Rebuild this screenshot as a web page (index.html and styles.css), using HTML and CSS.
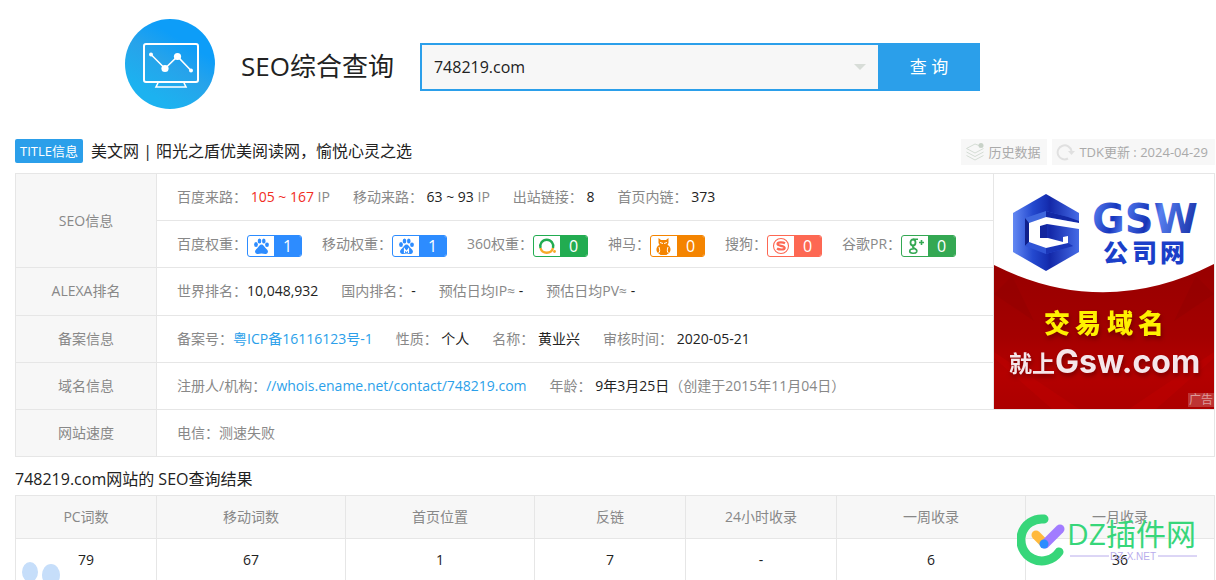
FILE: index.html
```html
<!DOCTYPE html>
<html lang="zh-CN">
<head>
    <meta charset="UTF-8">
    <meta name="viewport" content="width=device-width, initial-scale=1.0">
    <title>SEO综合查询</title>
    <link rel="stylesheet" href="styles.css">
</head>
<body>
    <header class="search-header">
        <svg class="logo" width="90" height="90" viewBox="0 0 90 90" aria-hidden="true">
            <defs>
                <linearGradient id="logoFill" x1="0.8" y1="0" x2="0.2" y2="1">
                    <stop offset="0.25" stop-color="#0d9df8"/>
                    <stop offset="0.5" stop-color="#27a3ea"/>
                    <stop offset="0.85" stop-color="#1cb2f0"/>
                </linearGradient>
            </defs>
            <circle cx="45" cy="45" r="45" fill="url(#logoFill)"/>
            <g fill="none" stroke="#fff" stroke-width="2">
                <rect x="19" y="25" width="54" height="38" rx="2"/>
                <path d="M33 64l-2 4h30l-2-4" stroke-width="1.6"/>
                <path d="M26 35.500l14 14 12.500-12 13.500 14" stroke-width="1.6"/>
            </g>
            <g fill="#fff">
                <circle cx="26" cy="35.500" r="2"/>
                <circle cx="40" cy="49.500" r="3.600"/>
                <circle cx="52.500" cy="37.500" r="3.600"/>
                <circle cx="66" cy="51.500" r="2"/>
            </g>
        </svg>
        <h1>SEO综合查询</h1>
        <form class="search-form">
            <div class="search-box">
                <input type="text" value="748219.com" aria-label="域名">
                <span class="search-arrow"></span>
            </div>
            <button type="button">查 询</button>
        </form>
    </header>

    <main>
        <div class="title-bar">
            <span class="title-tag">TITLE信息</span>
            <span class="site-title">美文网 | 阳光之盾优美阅读网，愉悦心灵之选</span>
            <div class="title-actions">
                <a href="#" class="action">
                    <svg width="20" height="20" viewBox="0 0 20 20" fill="none" stroke="#d5ddd5">
                        <path d="M14 3.500L10 2 1.500 6.500 10 11l8.500-4.500"/>
                        <path d="M1.500 10l8.500 4.500 8.500-4.500M1.500 13.500L10 18l8.500-4.500"/>
                        <circle cx="16" cy="3.500" r="2.500" fill="#c8d2c8" stroke="none"/>
                    </svg>
                    历史数据
                </a>
                <a href="#" class="action">
                    <svg width="20" height="20" viewBox="0 0 20 20" fill="none" stroke="#e0e0e0" stroke-width="2">
                        <path d="M12 16.500A7 7 0 1 1 15.500 9"/>
                        <path d="M12 9h7l-3.500 4z" fill="#e0e0e0" stroke="none"/>
                    </svg>
                    TDK更新 : 2024-04-29
                </a>
            </div>
        </div>

        <table class="info-table">
            <tr>
                <th rowspan="2">SEO信息</th>
                <td>
                    <div class="items">
                        <span>百度来路： <span class="red">105 ~ 167</span> IP</span>
                        <span>移动来路： <b>63 ~ 93</b> IP</span>
                        <span>出站链接： <b>8</b></span>
                        <span>首页内链： <b>373</b></span>
                    </div>
                </td>
                <td rowspan="5" class="ad-cell">
                    <a href="#" class="ad">
                        <svg width="220" height="235" viewBox="0 0 220 235">
                            <defs>
                                <linearGradient id="hexFill">
                                    <stop offset="0" stop-color="#6489f3"/>
                                    <stop offset="0.3" stop-color="#2449cf"/>
                                    <stop offset="0.5" stop-color="#1631b4"/>
                                    <stop offset="0.56" stop-color="#1328a8"/>
                                    <stop offset="1" stop-color="#456be6"/>
                                </linearGradient>
                                <linearGradient id="gswFill" gradientUnits="userSpaceOnUse" x1="98" y1="30" x2="204" y2="60">
                                    <stop offset="0" stop-color="#5b82f2"/>
                                    <stop offset="0.22" stop-color="#1636bd"/>
                                    <stop offset="0.32" stop-color="#4b73e9"/>
                                    <stop offset="0.52" stop-color="#1733b6"/>
                                    <stop offset="0.62" stop-color="#5880f0"/>
                                    <stop offset="1" stop-color="#1129a2"/>
                                </linearGradient>
                                <linearGradient id="redFill" x1="0" y1="0" x2="0" y2="1">
                                    <stop offset="0" stop-color="#980000"/>
                                    <stop offset="0.5" stop-color="#a40000"/>
                                    <stop offset="0.75" stop-color="#b40000"/>
                                    <stop offset="1" stop-color="#ac0000"/>
                                </linearGradient>
                            </defs>
                            <rect width="220" height="235" fill="#fff"/>
                            <path d="M0 91Q110 146 220 90V235H0z" fill="url(#redFill)"/>
                            <path d="M0 178l85 57H58L0 184zM220 178l-85 57h27l58-51z" fill="#c40000" opacity="0.4"/>
                            <path d="M18 102l22 45L0 120zM202 102l-22 45 40-27z" fill="#8c0000" opacity="0.35"/>
                            <!-- Hexagon logo: body, bevels, white G -->
                            <path d="M52 20l33 19v39L52 97 19 78V39z" fill="url(#hexFill)"/>
                            <path d="M31 44l21-7 22 6 11 4v2l-33-6-17 6v19l-4 4z" fill="#4068de"/>
                            <path d="M31 44l4 5v19l-4 4z" fill="#10208c"/>
                            <path d="M52 37l22 6 11 4v2l-33-6z" fill="#1329a6"/>
                            <path d="M31 72l4-4 17 6v6zM52 80v-6l22-5 5 3z" fill="#3055d6"/>
                            <path d="M52 80v-6l22-5 5 3z" fill="#1a35b8"/>
                            <path d="M46 52l7-2v14h-7z" fill="#12269e"/>
                            <path d="M35 49l17-6 33 6v6l-32-5-7 2v12h8l15 4v-5l5-1v7l-22 5-17-6z" fill="#fff"/>
                            <text x="98" y="59" class="ad-gsw">GSW</text>
                            <text x="109 138 166" y="88" class="ad-company">公司网</text>
                            <g class="ad-shadow">
                                <text x="50 81 113 144" y="159" class="ad-trade">交易域名</text>
                                <text x="15" y="198" class="ad-site">就上</text>
                                <text x="61" y="199" class="ad-domain">Gsw.com</text>
                            </g>
                        </svg>
                        <span class="ad-mark">广告</span>
                    </a>
                </td>
            </tr>
            <tr>
                <td>
                    <div class="items weights">
                        <span class="weight">百度权重：
                            <a href="#" class="badge blue">
                                <svg width="26" height="20" viewBox="0 0 26 20">
                                    <g fill="#2d8cff">
                                        <ellipse cx="8" cy="8.500" rx="1.900" ry="2.500"/>
                                        <ellipse cx="11.500" cy="5" rx="1.800" ry="2.500"/>
                                        <ellipse cx="15.800" cy="5" rx="1.800" ry="2.500"/>
                                        <ellipse cx="19" cy="8.800" rx="1.900" ry="2.300"/>
                                        <path d="M13.500 8.500c2 0 2.500 2 4 3.500 2.500 2 3 3.500 2 5-1.300 1.900-4 .6-6 .6s-4.500 1.300-6-.6c-1-1.500-.5-3 2-5 1.500-1.500 2-3.500 4-3.500z"/>
                                    </g>
                                </svg>
                                <span>1</span>
                            </a>
                        </span>
                        <span class="weight">移动权重：
                            <a href="#" class="badge blue">
                                <svg width="26" height="20" viewBox="0 0 26 20">
                                    <g fill="#2d8cff">
                                        <ellipse cx="8" cy="8.500" rx="1.900" ry="2.500"/>
                                        <ellipse cx="11.500" cy="5" rx="1.800" ry="2.500"/>
                                        <ellipse cx="15.800" cy="5" rx="1.800" ry="2.500"/>
                                        <ellipse cx="19" cy="8.800" rx="1.900" ry="2.300"/>
                                        <path d="M13.500 8.500c2 0 2.500 2 4 3.500 2.500 2 3 3.500 2 5-1.300 1.900-4 .6-6 .6s-4.500 1.300-6-.6c-1-1.500-.5-3 2-5 1.500-1.500 2-3.500 4-3.500z"/>
                                    </g>
                                    <path d="M11.500 17v-4l2 2.500 2-2.500v4" fill="none" stroke="#fff" stroke-width="1.200"/>
                                </svg>
                                <span>1</span>
                            </a>
                        </span>
                        <span class="weight">360权重：
                            <a href="#" class="badge green">
                                <svg width="26" height="20" viewBox="0 0 26 20" fill="none" stroke-width="2.400">
                                    <path d="M6.500 12a6.500 6.500 0 1 1 12.500 0" stroke="#22ac51"/>
                                    <path d="M6.500 12a6.500 6.500 0 0 0 12.500 0" stroke="#f8a929"/>
                                    <circle cx="20.500" cy="15.500" r="1.400" fill="#f8a929" stroke="none"/>
                                </svg>
                                <span>0</span>
                            </a>
                        </span>
                        <span class="weight">神马：
                            <a href="#" class="badge orange">
                                <svg width="26" height="20" viewBox="0 0 26 20">
                                    <path d="M7.500 2l2.500 2h5l2.500-2v5l-1 2c3 1 4 5 2 7.500-1 1.200-2 1.500-3 2.500h-6c-1-1-2-1.300-3-2.500-2-2.500-1-6.500 2-7.500l-1-2z" fill="#f48400"/>
                                    <path d="M9 6.500l3 1M16 6.500l-3 1M8 11c1 3 1 5-.5 6M17 11c-1 3-1 5 .5 6" stroke="#fff" fill="none"/>
                                </svg>
                                <span>0</span>
                            </a>
                        </span>
                        <span class="weight">搜狗：
                            <a href="#" class="badge coral">
                                <svg width="26" height="20" viewBox="0 0 26 20" fill="none" stroke="#fd6853">
                                    <circle cx="13" cy="10" r="7.500" stroke-width="1.100"/>
                                    <path d="M17 7.300c-2-1.200-7.500-1.300-7.500.7 0 2.200 7.200 1.500 7.200 4 0 2-5.700 1.800-7.700.5" stroke-width="2.200"/>
                                </svg>
                                <span>0</span>
                            </a>
                        </span>
                        <span class="weight">谷歌PR：
                            <a href="#" class="badge google">
                                <svg width="26" height="20" viewBox="0 0 26 20" fill="none" stroke="#34a853">
                                    <ellipse cx="11" cy="6.500" rx="2.500" ry="3" stroke-width="1.800"/>
                                    <path d="M11 3.300h5M12 9.500c-2 1-1.500 1.700 0 2.500 2.500 1.300 3.500 2 2.700 3.800-1 2-7 2-7-.5 0-2 2.500-2.500 4.300-2.500" stroke-width="1.600"/>
                                    <path d="M17 6.500h5M19.500 4v5" stroke-width="1.600"/>
                                </svg>
                                <span>0</span>
                            </a>
                        </span>
                    </div>
                </td>
            </tr>
            <tr>
                <th>ALEXA排名</th>
                <td>
                    <div class="items">
                        <span>世界排名：<b>10,048,932</b></span>
                        <span>国内排名：<b>-</b></span>
                        <span>预估日均IP≈ <b>-</b></span>
                        <span>预估日均PV≈ <b>-</b></span>
                    </div>
                </td>
            </tr>
            <tr>
                <th>备案信息</th>
                <td>
                    <div class="items">
                        <span>备案号：<a href="#">粤ICP备16116123号-1</a></span>
                        <span>性质： <b>个人</b></span>
                        <span>名称： <b>黄业兴</b></span>
                        <span>审核时间： <b>2020-05-21</b></span>
                    </div>
                </td>
            </tr>
            <tr>
                <th>域名信息</th>
                <td>
                    <div class="items">
                        <span>注册人/机构：<a href="#">//whois.ename.net/contact/748219.com</a></span>
                        <span>年龄： <b>9年3月25日</b>（创建于2015年11月04日）</span>
                    </div>
                </td>
            </tr>
            <tr>
                <th>网站速度</th>
                <td colspan="2">
                    <div class="items">
                        <span>电信：测速失败</span>
                    </div>
                </td>
            </tr>
        </table>

        <h2>748219.com网站的 SEO查询结果</h2>

        <table class="result-table">
            <thead>
                <tr>
                    <th class="first">PC词数</th>
                    <th>移动词数</th>
                    <th>首页位置</th>
                    <th class="narrow">反链</th>
                    <th class="narrow">24小时收录</th>
                    <th>一周收录</th>
                    <th>一月收录</th>
                </tr>
            </thead>
            <tbody>
                <tr>
                    <td>79</td>
                    <td>67</td>
                    <td>1</td>
                    <td>7</td>
                    <td>-</td>
                    <td>6</td>
                    <td>36</td>
                </tr>
            </tbody>
        </table>
    </main>

    <!-- Floating paw and site watermark -->
    <svg class="paw" width="60" height="19" viewBox="0 0 60 19" aria-hidden="true">
        <g fill="#c6defa">
            <ellipse cx="30" cy="11" rx="8" ry="10"/>
            <ellipse cx="51" cy="14" rx="9" ry="11"/>
        </g>
    </svg>
    <svg class="watermark" width="184" height="56" viewBox="0 0 184 56" aria-hidden="true">
        <path d="M27 7A21 21 0 1 0 42 40" fill="none" stroke="#37d67a" stroke-width="9" stroke-linecap="round"/>
        <g fill="none" stroke-width="9" stroke-linecap="round">
            <path d="M19 23l8 8" stroke="#ffb93c"/>
            <path d="M28 32l15-15" stroke="#a27cff"/>
        </g>
        <circle cx="27" cy="32" r="4.500" fill="#2d8cff"/>
        <text x="50" y="33" class="wm-name">DZ插件网</text>
        <path d="M53 44h39M141 44h39" stroke="#b9acec"/>
        <text x="93" y="48" class="wm-domain">DZ-X.NET</text>
    </svg>
</body>
</html>
```
FILE: styles.css
```css
* {
    box-sizing: border-box;
}

html {
    scrollbar-width: none;
}

body {
    position: relative;
    margin: 0;
    padding: 0 1px 0 15px;
    background-color: #fff;
    color: #222;
    font-family: "Open Sans", "Noto Sans CJK SC", sans-serif;
    font-size: 14px;
    line-height: 20px;
}

a {
    color: #2b9fea;
    text-decoration: none;
}

/* Header with the search form */
.search-header {
    display: flex;
    align-items: center;
    height: 139px;
    padding: 0 0 11px 110px;
}

.logo {
    margin-right: 26px;
}

h1 {
    margin: 4px 26px 0 0;
    font-size: 26px;
    line-height: 36px;
    font-weight: normal;
}

.search-form {
    display: flex;
    width: 560px;
    height: 48px;
    margin-top: 6px;
}

.search-box {
    position: relative;
    flex: 1;
}

.search-box input {
    width: 100%;
    height: 100%;
    padding: 0 12px;
    border: 2px solid #2b9fea;
    border-right: none;
    border-radius: 0;
    background-color: #f7f7f7;
    color: #222;
    font: inherit;
    font-size: 16px;
    outline: none;
}

.search-arrow {
    position: absolute;
    top: 21px;
    right: 12px;
    border: 6px solid transparent;
    border-top-color: #d8ddd8;
    border-bottom: none;
}

.search-form button {
    width: 102px;
    padding: 0;
    border: none;
    background-color: #2b9fea;
    color: #fff;
    font: inherit;
    font-size: 17px;
    cursor: pointer;
}

/* Title line */
.title-bar {
    display: flex;
    height: 34px;
    align-items: flex-start;
}

.title-tag {
    padding: 0 5px;
    border-radius: 2px;
    background-color: #2b9fea;
    color: #fff;
    font-size: 13px;
    line-height: 24px;
}

.site-title {
    margin-left: 8px;
    font-size: 16px;
    line-height: 24px;
}

.title-actions {
    display: flex;
    gap: 5px;
    margin-left: auto;
}

.action {
    display: flex;
    align-items: center;
    gap: 3px;
    height: 26px;
    padding: 0 7px 0 4px;
    background-color: #f7f7f7;
    color: #aaa;
    font-size: 13px;
}

/* Tables */
table {
    width: 100%;
    border-collapse: collapse;
    table-layout: fixed;
}

th,
td {
    padding: 0;
    border: 1px solid #e6e6e6;
    font-weight: normal;
}

th {
    background-color: #f7f7f7;
    color: #888;
    text-align: center;
}

.info-table tr {
    height: 47px;
}

.info-table th {
    width: 141px;
}

.info-table td {
    color: #888;
}

.items {
    display: flex;
    gap: 23px;
    padding-left: 20px;
    white-space: nowrap;
}

.items b {
    color: #222;
    font-weight: normal;
}

.items .red {
    color: #f12d1f;
}

/* Weight badges */
.weights {
    gap: 20px;
}

.weight {
    display: flex;
    align-items: center;
    height: 24px;
}

.badge {
    display: flex;
    width: 55px;
    height: 22px;
    margin-top: 3px;
    border: 1px solid;
    border-radius: 3px;
    overflow: hidden;
}

.badge span {
    flex: 1;
    color: #fff;
    font-size: 16px;
    line-height: 20px;
    text-align: center;
}

.blue { border-color: #2d8cff; }
.blue span { background-color: #2d8cff; }
.green { border-color: #22ac51; }
.green span { background-color: #22ac51; }
.orange { border-color: #f48400; }
.orange span { background-color: #f48400; }
.coral { border-color: #fd6853; }
.coral span { background-color: #fd6853; }
.google { border-color: #34a853; }
.google span { background-color: #34a853; }

/* Advertisement */
.info-table .ad-cell {
    width: 221px;
    vertical-align: top;
}

.ad {
    position: relative;
    display: block;
}

.ad svg {
    display: block;
}

.ad-gsw {
    fill: url(#gswFill);
    font: bold 40px "DejaVu Sans", sans-serif;
}

.ad-company {
    fill: #1b3fc9;
    font: 900 25px "Noto Sans CJK SC", sans-serif;
}

.ad-trade {
    fill: #fff100;
    font: 900 26px "Noto Sans CJK SC", sans-serif;
}

.ad-site {
    fill: #f5e6ea;
    font: bold 23px "Noto Sans CJK SC", sans-serif;
}

.ad-domain {
    fill: #f5e6ea;
    font: bold 32px Inter, sans-serif;
}

.ad-shadow {
    filter: drop-shadow(1px 3px 2px rgba(70, 0, 0, 0.5));
}

.ad-mark {
    position: absolute;
    right: 0;
    bottom: 2px;
    width: 26px;
    background-color: rgba(255, 255, 255, 0.2);
    color: #dc9a9a;
    font-size: 12px;
    line-height: 14px;
    text-align: center;
}

/* Query results */
h2 {
    margin: 10px 0 4px;
    font-size: 16px;
    line-height: 24px;
    font-weight: normal;
}

.result-table tr {
    height: 43px;
}

.result-table td {
    text-align: center;
}

.result-table .first {
    width: 141px;
}

.result-table .narrow {
    width: 151px;
}

/* Overlays */
.paw {
    position: absolute;
    left: 0;
    top: 561px;
}

.watermark {
    position: absolute;
    right: 15px;
    top: 512px;
}

.wm-name {
    fill: #37d67a;
    font: 30px "Open Sans", "Noto Sans CJK SC", sans-serif;
}

.wm-domain {
    fill: #b9acec;
    font: 10px "Liberation Sans", sans-serif;
}
```
